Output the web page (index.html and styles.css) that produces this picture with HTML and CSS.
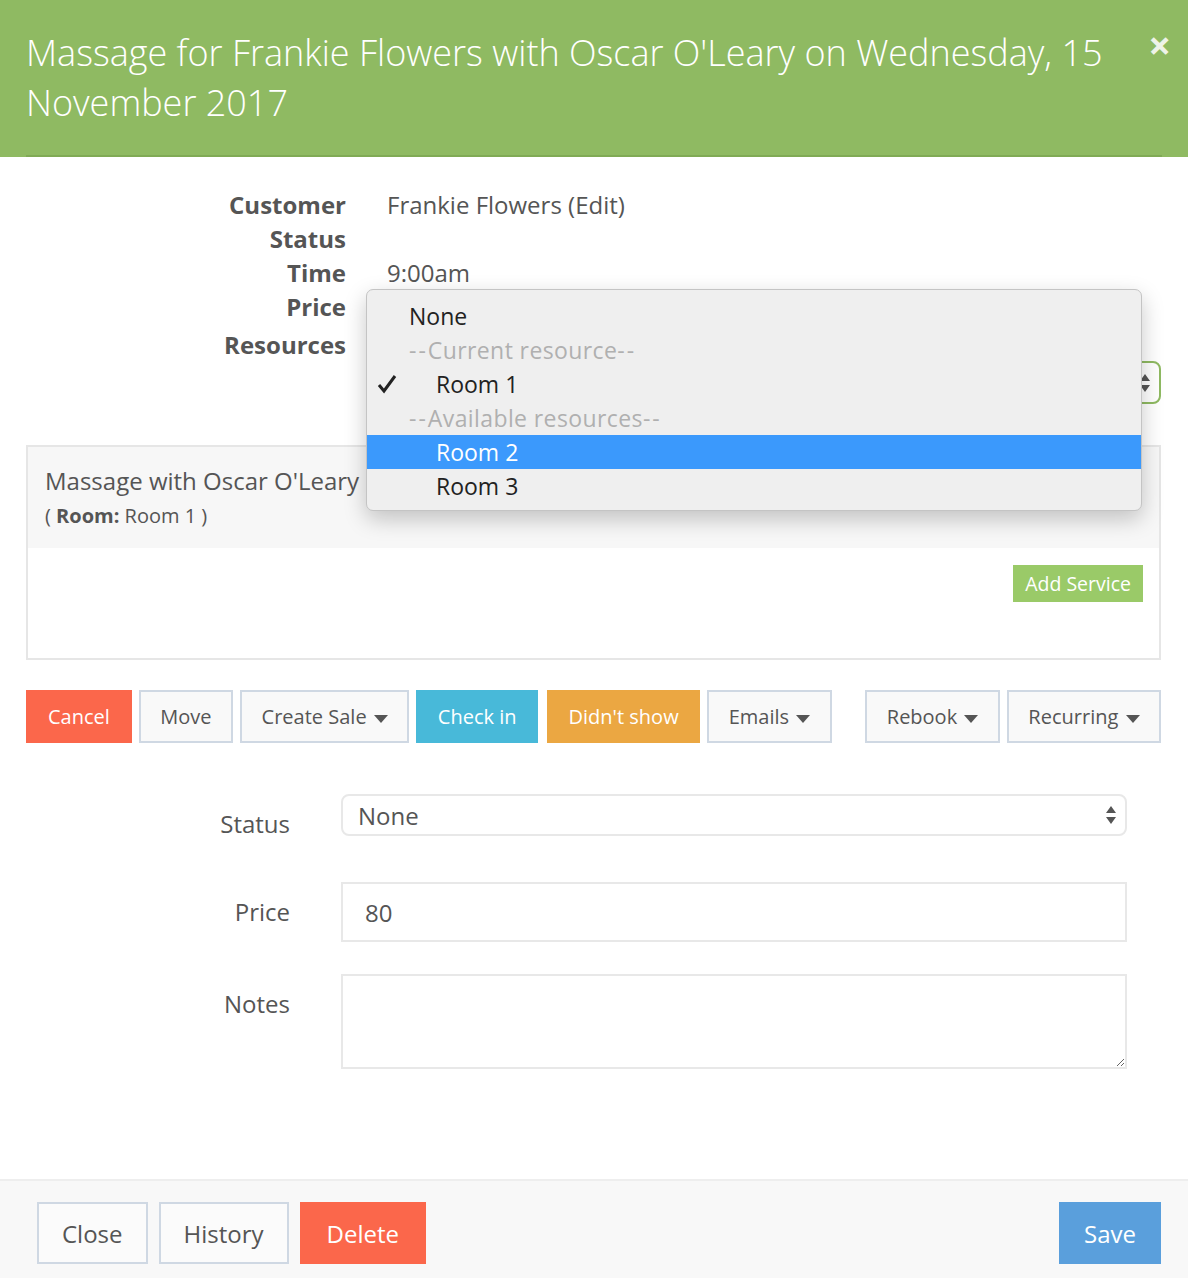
FILE: index.html
```html
<!DOCTYPE html>
<html lang="en">
<head>
    <meta charset="UTF-8">
    <meta name="viewport" content="width=device-width, initial-scale=1.0">
    <link rel="stylesheet" href="styles.css">
    <title>Appointment</title>
</head>
<body>
    <div class="modal">
        <div class="modal-header">
            <h1 class="modal-title">Massage for Frankie Flowers with Oscar O'Leary on Wednesday, 15 November 2017</h1>
            <span class="close">&times;</span>
        </div>

        <div class="modal-body">
            <dl class="details">
                <dt>Customer</dt>
                <dd>Frankie Flowers (Edit)</dd>
                <dt>Status</dt>
                <dd></dd>
                <dt>Time</dt>
                <dd>9:00am</dd>
                <dt>Price</dt>
                <dd></dd>
                <dt class="resLabel">Resources</dt>
                <dd class="resValue">
                    <div class="fakeSelect selGreen">
                        <span></span>
                        <svg class="arrows" width="12" height="22" viewBox="0 0 12 22"><path d="M6 2 L11 9 L1 9 Z M6 20 L11 13 L1 13 Z" fill="#555"/></svg>
                    </div>
                    <!-- menu abierto del select -->
                    <ul class="popup">
                        <li>None</li>
                        <li class="off"><span class="dash">--</span>Current resource<span class="dash">--</span></li>
                        <li class="sub">
                            <svg class="check" width="20" height="20" viewBox="0 0 20 20"><path d="M2 11 L7 17 L18 2" fill="none" stroke="#222" stroke-width="3"/></svg>
                            Room 1
                        </li>
                        <li class="off"><span class="dash">--</span>Available resources<span class="dash">--</span></li>
                        <li class="sub active">Room 2</li>
                        <li class="sub">Room 3</li>
                    </ul>
                </dd>
            </dl>

            <div class="serviceBox">
                <div class="serviceHead">
                    <div class="serviceName">Massage with Oscar O'Leary</div>
                    <div class="serviceRoom">( <b>Room:</b> Room 1 )</div>
                </div>
                <div class="serviceFoot">
                    <button class="btn btnGreen">Add Service</button>
                </div>
            </div>

            <div class="actions">
                <div class="group">
                    <button class="btn btnAction btnRed">Cancel</button>
                    <button class="btn btnAction">Move</button>
                    <button class="btn btnAction">Create Sale <i class="caret"></i></button>
                    <button class="btn btnAction btnBlue">Check in</button>
                    <button class="btn btnAction btnOrange">Didn't show</button>
                    <button class="btn btnAction">Emails <i class="caret"></i></button>
                </div>
                <div class="group">
                    <button class="btn btnAction">Rebook <i class="caret"></i></button>
                    <button class="btn btnAction">Recurring <i class="caret"></i></button>
                </div>
            </div>

            <form class="form">
                <div class="formGroup statusGroup">
                    <label>Status</label>
                    <div class="fakeSelect selGrey">
                        <span>None</span>
                        <svg class="arrows" width="12" height="22" viewBox="0 0 12 22"><path d="M6 2 L11 9 L1 9 Z M6 20 L11 13 L1 13 Z" fill="#555"/></svg>
                    </div>
                </div>
                <div class="formGroup">
                    <label>Price</label>
                    <input type="text" class="input" value="80">
                </div>
                <div class="formGroup">
                    <label>Notes</label>
                    <textarea class="textarea"></textarea>
                </div>
            </form>
        </div>

        <div class="modal-footer">
            <div class="group">
                <button class="btn btnFoot">Close</button>
                <button class="btn btnFoot">History</button>
                <button class="btn btnFoot btnRed">Delete</button>
            </div>
            <button class="btn btnFoot btnSave">Save</button>
        </div>
    </div>
</body>
</html>
```

FILE: styles.css
```css
*{
    box-sizing: border-box;
    font-family: 'Open Sans', 'Liberation Sans', sans-serif;
}
body{
    margin: 0;
    padding: 0;
    background: #ffffff;
    color: #555555;
}

/* Cabecera verde */
.modal-header{
    position: relative;
    background: #8fba62;
    padding: 28px 26px 0 26px;
}
.modal-title{
    margin: 0;
    padding-bottom: 27px;
    border-bottom: 2px solid #80aa55;
    font-size: 36px;
    font-weight: 300;
    line-height: 50px;
    color: #ffffff;
}
.close{
    position: absolute;
    top: 22px;
    right: 17px;
    font-size: 40px;
    font-weight: 700;
    line-height: 46px;
    color: #eef3e8;
}

.modal-body{
    padding: 0 27px 0 26px;
}

/* Datos de la cita */
.details{
    display: grid;
    grid-template-columns: 320px 1fr;
    column-gap: 41px;
    margin: 31px 0 0 0;
    font-size: 24px;
    line-height: 34px;
}
.details dt{
    text-align: right;
    font-weight: 700;
}
.details dd{
    margin: 0;
    min-height: 34px;
}
.resLabel{
    margin-top: 4px;
}
.resValue{
    position: relative;
    margin-top: 4px !important;
    padding-top: 33px;
}

.fakeSelect{
    display: flex;
    align-items: center;
    justify-content: space-between;
    border-radius: 8px;
    padding: 0 8px 0 15px;
    font-size: 24px;
    color: #555;
}
.selGreen{
    height: 43px;
    border: 2px solid #8fba62;
}
.selGrey{
    height: 42px;
    border: 2px solid #e8e8e8;
}
.arrows{
    display: block;
}

/* Menu desplegado */
.popup{
    position: absolute;
    left: -21px;
    top: -39px;
    width: 776px;
    margin: 0;
    padding: 9px 0 7px 0;
    list-style: none;
    background: #efefef;
    border: 1px solid #c4c4c4;
    border-radius: 7px;
    box-shadow: 0 8px 22px rgba(0, 0, 0, 0.22);
    font-family: Inter, 'Noto Sans', sans-serif;
    font-size: 23px;
    line-height: 34px;
    color: #222;
}
.popup li{
    position: relative;
    padding-left: 42px;
}
.popup .sub{
    padding-left: 69px;
}
.popup .off{
    color: #b0b0b0;
    letter-spacing: 0.4px;
}
.dash{
    letter-spacing: 2px;
}
.popup .active{
    background: #3b99fc;
    color: #ffffff;
}
.check{
    position: absolute;
    left: 10px;
    top: 7px;
}

/* Caja del servicio */
.serviceBox{
    margin-top: 41px;
    border: 2px solid #e6e6e6;
}
.serviceHead{
    background: #f7f7f7;
    padding: 17px 17px 14px 17px;
}
.serviceName{
    font-size: 24px;
    line-height: 34px;
}
.serviceRoom{
    font-size: 20px;
    line-height: 36px;
}
.serviceFoot{
    display: flex;
    justify-content: flex-end;
    padding: 17px 16px 56px 16px;
}

.btn{
    margin: 0;
    border: 2px solid #cfd8e3;
    background: #f9f9f9;
    color: #555;
    cursor: pointer;
    white-space: nowrap;
}
.btnGreen{
    height: 37px;
    padding: 0 10px;
    font-size: 19.5px;
    background: #9aca68;
    border-color: #9aca68;
    color: #ffffff;
}

/* Fila de acciones */
.actions{
    display: flex;
    justify-content: space-between;
    margin-top: 30px;
}
.group{
    display: flex;
    gap: 7px;
}
.btnAction{
    height: 53px;
    padding: 0 19.5px;
    font-size: 20px;
}
.btnRed{
    background: #fb674b;
    border-color: #fb674b;
    color: #ffffff;
}
.btnRed.btnAction{
    padding: 0 20px;
}
.btnBlue{
    background: #48b9d9;
    border-color: #48b9d9;
    color: #ffffff;
}
.btnOrange{
    background: #eba742;
    border-color: #eba742;
    color: #ffffff;
    margin-left: 2px;
}
.caret{
    display: inline-block;
    width: 0;
    height: 0;
    margin-left: 2px;
    vertical-align: middle;
    border-top: 8px solid #555;
    border-left: 7px solid transparent;
    border-right: 7px solid transparent;
}

/* Formulario */
.form{
    margin: 51px 34px 0 0;
    padding-bottom: 110px;
}
.formGroup{
    display: grid;
    grid-template-columns: 264px 1fr;
    column-gap: 51px;
    align-items: start;
    margin-bottom: 32px;
}
.statusGroup{
    min-height: 56px;
}
.formGroup:last-child{
    margin-bottom: 0;
}
.formGroup label{
    text-align: right;
    font-size: 24px;
    line-height: 34px;
    padding-top: 13px;
}
.input{
    height: 60px;
    border: 2px solid #e8e8e8;
    padding: 0 22px;
    font-size: 24px;
    color: #555;
    outline: none;
}
.textarea{
    display: block;
    height: 95px;
    border: 2px solid #e8e8e8;
    font-size: 24px;
    color: #555;
    outline: none;
}

/* Pie */
.modal-footer{
    display: flex;
    justify-content: space-between;
    background: #f8f8f8;
    border-top: 2px solid #eeeeee;
    padding: 21px 27px 14px 37px;
}
.modal-footer .group{
    gap: 11px;
}
.btnFoot{
    height: 62px;
    padding: 0 23px;
    font-size: 24px;
    background: #fbfbfb;
}
.modal-footer .btnRed{
    padding: 0 25px;
    background: #fb674b;
    border-color: #fb674b;
}
.btnSave{
    background: #5a9fdc;
    border-color: #5a9fdc;
    color: #ffffff;
}
```
